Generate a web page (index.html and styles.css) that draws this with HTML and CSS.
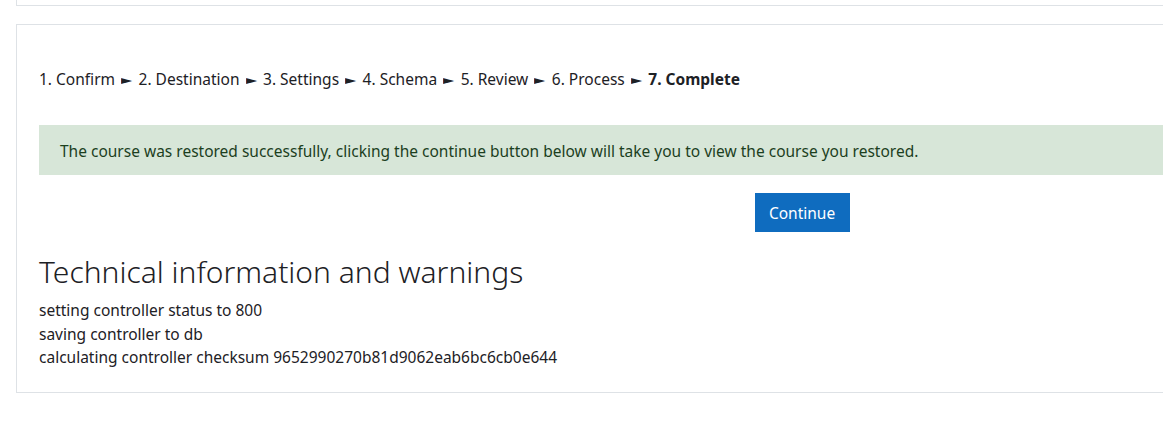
FILE: index.html
```html
<!DOCTYPE html>
<html>
<head>
<meta charset="utf-8">
<link rel="stylesheet" href="styles.css">
</head>
<body>
<div class="card card-top"></div>
<div class="card card-main">
  <div class="steps">
    <span>1. Confirm</span><span class="arrow">►</span><span>2. Destination</span><span class="arrow">►</span><span>3. Settings</span><span class="arrow">►</span><span>4. Schema</span><span class="arrow">►</span><span>5. Review</span><span class="arrow">►</span><span>6. Process</span><span class="arrow">►</span><strong>7. Complete</strong>
  </div>
  <div class="alert">The course was restored successfully, clicking the continue button below will take you to view the course you restored.</div>
  <div class="actions"><button class="btn">Continue</button></div>
  <h2 class="title">Technical information and warnings</h2>
  <div class="log">
    <div>setting controller status to 800</div>
    <div>saving controller to db</div>
    <div>calculating controller checksum 9652990270b81d9062eab6bc6cb0e644</div>
  </div>
</div>
</body>
</html>
```
FILE: styles.css
```css
html, body {
  margin: 0;
  padding: 0;
  background: #fff;
  overflow: hidden;
}
body {
  font-family: "Noto Sans", "Open Sans", sans-serif;
  font-size: 15.5px;
  line-height: 1.5;
  color: #1d2125;
  width: 1163px;
  height: 423px;
}
.card {
  border: 1px solid #dee2e6;
  background: #fff;
  margin-left: 16px;
  width: 1572px;
  box-sizing: border-box;
}
.card-top {
  height: 6px;
  border-top: none;
}
.card-main {
  margin-top: 18px;
  padding: 44px 22px 22px 22px;
}
.steps {
  display: flex;
  align-items: center;
  white-space: nowrap;
  height: 22px;
}
.arrow {
  font-family: "DejaVu Sans", sans-serif;
  font-size: 12px;
  margin: 0 7.3px 0 7px;
  display: inline-block;
  transform: scaleX(1.2);
}
.steps strong {
  font-weight: 700;
}
.alert {
  margin-top: 34px;
  background: #d7e6d8;
  color: #1c3f1e;
  padding: 3px 21px 0 21px;
  height: 50px;
  display: flex;
  align-items: center;
  box-sizing: border-box;
  white-space: nowrap;
}
.actions {
  display: flex;
  justify-content: center;
  margin-top: 18px;
}
.btn {
  font-family: inherit;
  font-size: 15.5px;
  background: #0f6cbf;
  color: #fff;
  border: none;
  height: 39px;
  width: 95px;
  padding: 0;
  margin-left: 0;
}
.title {
  margin: 20px 0 0 0;
  font-size: 30px;
  font-weight: 300;
  line-height: 1.3;
  color: #1d2125;
}
.log {
  margin-top: 8px;
  line-height: 23.5px;
}
```
